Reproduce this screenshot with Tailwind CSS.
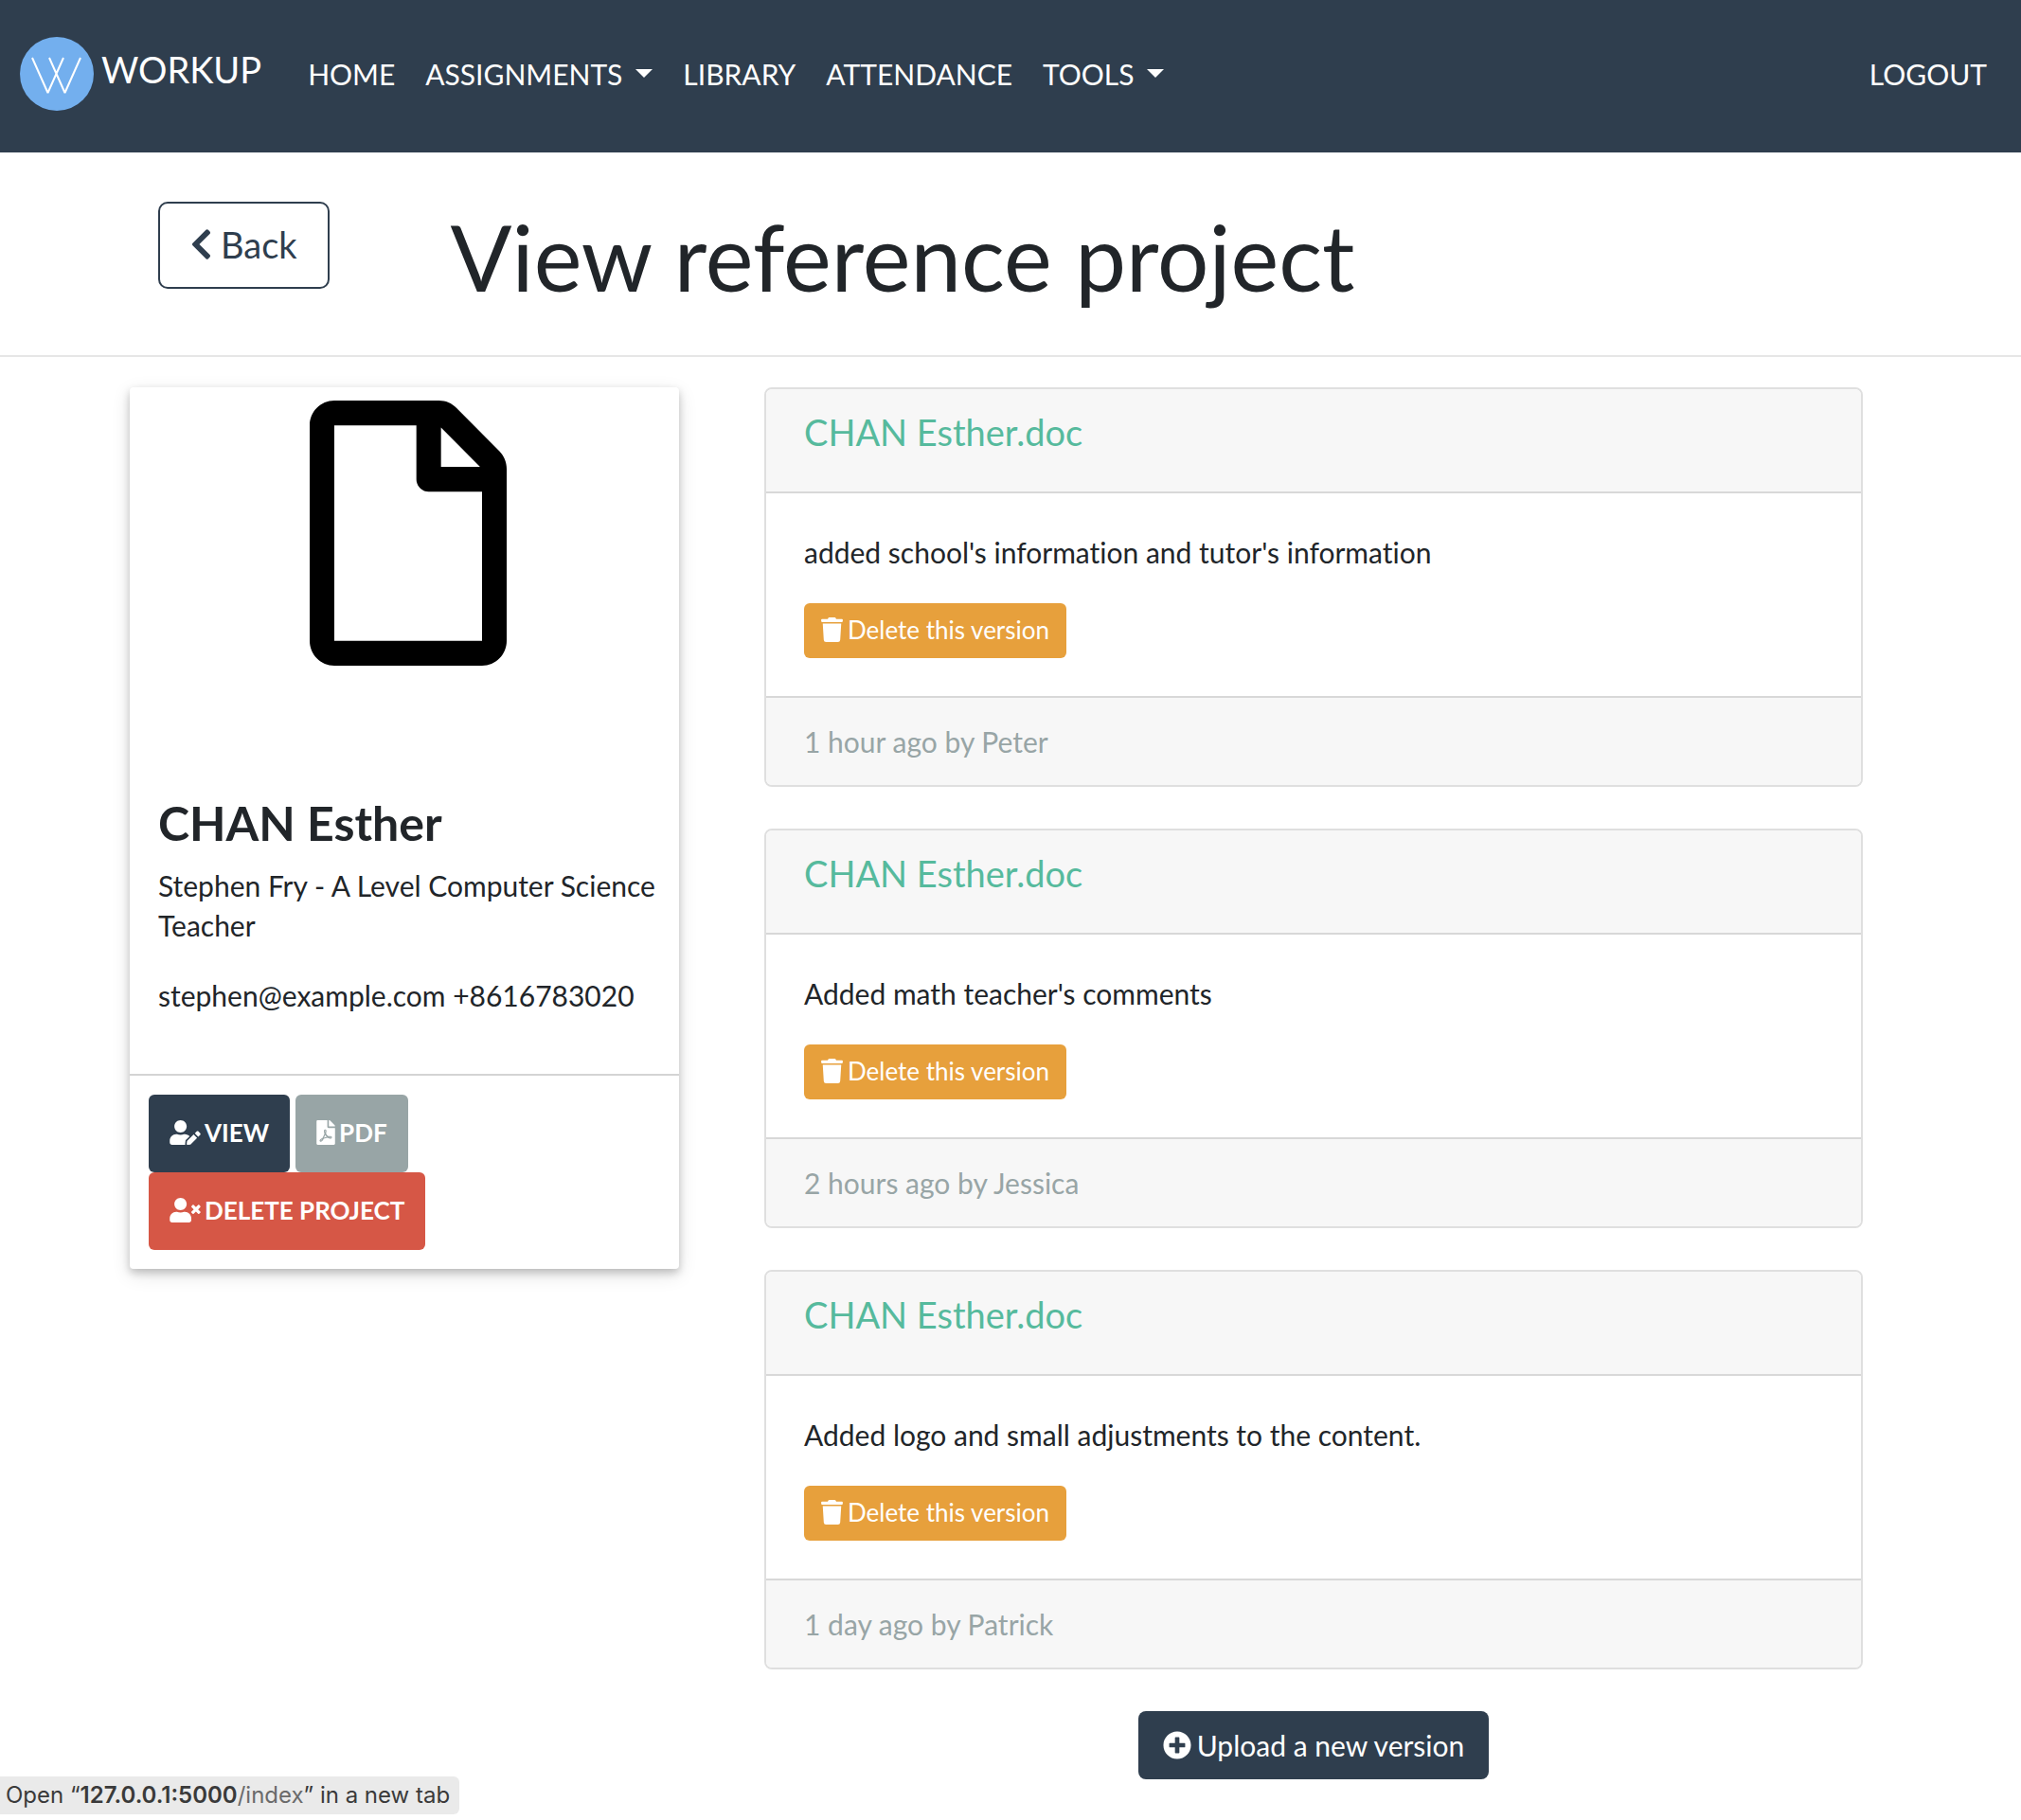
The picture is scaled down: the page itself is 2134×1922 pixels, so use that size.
<!DOCTYPE html>
<html lang="en">
<head>
<meta charset="utf-8">
<meta name="viewport" content="width=device-width, initial-scale=1">
<title>Workup</title>
<script src="https://cdn.jsdelivr.net/npm/@tailwindcss/browser@4"></script>
</head>
<body class="relative min-h-screen bg-white font-['Lato',sans-serif] text-[30px] leading-[42px] text-[#212529] [font-variant-ligatures:no-common-ligatures]">
<svg class="hidden" aria-hidden="true">
  <symbol id="trash" viewBox="0 0 448 512"><path d="M432 32H312l-9.4-18.7A24 24 0 0 0 281.1 0H166.8a23.72 23.72 0 0 0-21.4 13.3L136 32H16A16 16 0 0 0 0 48v32a16 16 0 0 0 16 16h416a16 16 0 0 0 16-16V48a16 16 0 0 0-16-16zM32 128l21.2 339a48 48 0 0 0 47.9 45h245.8a48 48 0 0 0 47.9-45L416 128z"/></symbol>
</svg>

<header class="bg-[#2f3e4e] text-white">
  <nav class="flex h-[161px] items-center pr-[36px] pl-[21px] pb-[6px]">
    <a href="#" class="mr-[49px] flex items-center gap-[8px] text-[38px] leading-[46px]">
      <svg class="size-[78px]" viewBox="0 0 78 78" aria-hidden="true"><circle cx="39" cy="39" r="39" fill="#73afee"/><path d="M13 22L29.500 59L46 22M31 22L47.500 59L64 22" fill="none" stroke="#fff" stroke-width="2" stroke-linejoin="bevel"/></svg>
      <span class="pb-[10px]">WORKUP</span>
    </a>
    <ul class="flex flex-1 items-center gap-[32px]">
      <li><a href="#">HOME</a></li>
      <li><button type="button" class="flex items-center gap-[14px]">ASSIGNMENTS <svg class="h-[9px] w-[18px]" viewBox="0 0 18 9" fill="#fff" aria-hidden="true"><path d="M0 0h18l-9 9z"/></svg></button></li>
      <li><a href="#">LIBRARY</a></li>
      <li><a href="#">ATTENDANCE</a></li>
      <li><button type="button" class="flex items-center gap-[14px]">TOOLS <svg class="h-[9px] w-[18px]" viewBox="0 0 18 9" fill="#fff" aria-hidden="true"><path d="M0 0h18l-9 9z"/></svg></button></li>
      <li class="ml-auto"><a href="#">LOGOUT</a></li>
    </ul>
  </nav>
</header>

<section class="border-b-2 border-[#e6e6e6] pt-[52px] pb-[46px]">
  <div class="mx-auto flex max-w-[1920px] items-start gap-[128px] px-[60px]">
    <button type="button" class="flex h-[92px] items-center gap-[9px] rounded-[10px] border-2 border-[#2f3e4e] px-[32px] pb-[2px] text-[38px] leading-[56px] text-[#2f3e4e]">
      <svg class="h-[38px] w-[23px]" viewBox="0 0 320 512" fill="currentColor" aria-hidden="true"><path d="M34.52 239.03L228.87 44.69c9.37-9.37 24.57-9.37 33.94 0l22.67 22.67c9.36 9.36 9.37 24.52.04 33.9L131.49 256l154.02 154.75c9.34 9.38 9.32 24.54-.04 33.9l-22.67 22.67c-9.37 9.37-24.57 9.37-33.94 0L34.52 272.97c-9.37-9.37-9.37-24.57 0-33.94z"/></svg>
      Back
    </button>
    <h1 class="text-[96px] leading-[116px]">View reference project</h1>
  </div>
</section>

<main class="mx-auto grid max-w-[1920px] grid-cols-3 items-start px-[30px] pt-[32px]">
  <aside class="mr-[40px] rounded-[4px] bg-white shadow-[0_4px_8px_rgba(0,0,0,0.2),0_6px_20px_rgba(0,0,0,0.12)]">
    <div class="flex justify-center pt-[14px] pb-[136px] pl-[8px]">
      <svg class="h-[280px] w-[208px]" viewBox="0 0 384 512" preserveAspectRatio="none" role="img" aria-label="Document"><path d="M369.9 97.9L286 14C277 5 264.8 0 252.1 0H48C21.5 0 0 21.5 0 48v416c0 26.5 21.5 48 48 48h288c26.5 0 48-21.5 48-48V131.9c0-12.7-5.1-25-14.1-34zM332.1 128H256V51.9l76.1 76.1zM48 464V48h160v104c0 13.3 10.7 24 24 24h104v288H48z"/></svg>
    </div>
    <div class="pr-[16px] pb-[62px] pl-[30px]">
      <h2 class="mb-[15px] text-[50px] leading-[60px] font-bold">CHAN Esther</h2>
      <p class="mb-[32px]">Stephen Fry - A Level Computer Science Teacher</p>
      <p>stephen@example.com +8616783020</p>
    </div>
    <div class="flex flex-wrap gap-x-[6px] border-t-2 border-[#d4d4d4] p-[20px] text-[26px] font-bold text-white">
      <button type="button" class="flex h-[82px] items-center gap-[4px] rounded-[6px] bg-[#2f3e4e] px-[22px] pb-[2px]">
        <svg class="h-[26px] w-[33px]" viewBox="0 0 640 512" fill="currentColor" aria-hidden="true"><path d="M224 256c70.7 0 128-57.3 128-128S294.7 0 224 0 96 57.3 96 128s57.3 128 128 128zm89.6 32h-16.7c-22.2 10.2-46.9 16-72.9 16s-50.6-5.8-72.9-16h-16.7C60.2 288 0 348.2 0 422.4V464c0 26.5 21.5 48 48 48h274.9c-2.4-6.8-3.4-14-2.6-21.3l6.8-60.9 1.2-11.1 7.9-7.9 77.3-77.3c-24.5-27.7-60-45.5-99.9-45.5zm45.3 145.3l-6.8 61c-1.1 10.2 7.5 18.8 17.6 17.6l60.9-6.8 137.9-137.9-71.7-71.7-137.9 137.8zM633 268.9L595.1 231c-9.3-9.3-24.5-9.3-33.8 0l-37.8 37.8-4.1 4.1 71.8 71.7 41.8-41.8c9.3-9.4 9.3-24.5 0-33.9z"/></svg>
        VIEW
      </button>
      <button type="button" class="flex h-[82px] items-center gap-[4px] rounded-[6px] bg-[#98a5a6] px-[22px] pb-[2px]">
        <svg class="h-[26px] w-[20px]" viewBox="0 0 384 512" fill="currentColor" aria-hidden="true"><path d="M181.9 256.1c-5-16-4.9-46.9-2-46.9 8.4 0 7.6 36.9 2 46.9zm-1.7 47.2c-7.7 20.2-17.3 43.3-28.4 62.7 18.3-7 39-17.2 62.9-21.9-12.7-9.6-24.9-23.4-34.5-40.8zM86.1 428.1c0 .8 13.2-5.4 34.9-40.2-6.7 6.3-29.1 24.5-34.9 40.2zM248 160h136v328c0 13.3-10.7 24-24 24H24c-13.3 0-24-10.7-24-24V24C0 10.7 10.7 0 24 0h200v136c0 13.2 10.8 24 24 24zm-8 171.8c-20-12.2-33.3-29-42.7-53.8 4.5-18.5 11.6-46.6 6.2-64.2-4.7-29.4-42.4-26.5-47.8-6.8-5 18.3-.4 44.1 8.1 77-11.6 27.6-28.7 64.6-40.8 85.8-.1 0-.1.1-.2.1-27.1 13.9-73.6 44.5-54.5 68 5.6 6.9 16 10 21.5 10 17.9 0 35.7-18 61.1-61.8 25.8-8.5 54.1-19.1 79-23.2 21.7 11.8 47.1 19.5 64 19.5 29.2 0 31.2-32 19.7-43.4-13.9-13.6-54.3-9.7-73.6-7.2zM377 105L279 7c-4.5-4.5-10.6-7-17-7h-6v128h128v-6.1c0-6.3-2.5-12.4-7-16.9zm-74.1 255.3c4.1-2.7-2.5-11.9-42.8-9 37.1 15.8 42.8 9 42.8 9z"/></svg>
        PDF
      </button>
      <button type="button" class="flex h-[82px] items-center gap-[4px] rounded-[6px] bg-[#d65746] px-[22px] pb-[2px]">
        <svg class="h-[26px] w-[33px]" viewBox="0 0 640 512" fill="currentColor" aria-hidden="true"><path d="M589.6 240l45.6-45.6c6.3-6.3 6.3-16.5 0-22.8l-22.8-22.8c-6.3-6.3-16.5-6.3-22.8 0L544 194.4l-45.6-45.6c-6.3-6.3-16.5-6.3-22.8 0l-22.8 22.8c-6.3 6.3-6.3 16.5 0 22.8l45.6 45.6-45.6 45.6c-6.3 6.3-6.3 16.5 0 22.8l22.8 22.8c6.3 6.3 16.5 6.3 22.8 0l45.6-45.6 45.6 45.6c6.3 6.3 16.5 6.3 22.8 0l22.8-22.8c6.3-6.3 6.3-16.5 0-22.8L589.6 240zM224 256c70.7 0 128-57.3 128-128S294.7 0 224 0 96 57.3 96 128s57.3 128 128 128zm89.6 32h-16.7c-22.2 10.2-46.9 16-72.9 16s-50.6-5.8-72.9-16h-16.7C60.2 288 0 348.2 0 422.4V464c0 26.5 21.5 48 48 48h352c26.5 0 48-21.5 48-48v-41.6c0-74.2-60.2-134.4-134.4-134.4z"/></svg>
        DELETE PROJECT
      </button>
    </div>
  </aside>

  <div class="col-span-2 flex flex-col gap-[44px] pr-[30px] pl-[50px]">
    <article class="overflow-hidden rounded-[8px] border-2 border-[#dfdfdf]">
      <h4 class="h-[110px] border-b-2 border-[#d8d8d8] bg-[#f7f7f7] px-[40px] pt-[22px] text-[38px] leading-[46px]"><a href="#" class="text-[#56ba9d]">CHAN Esther.doc</a></h4>
      <div class="px-[40px] pt-[41px] pb-[40px]">
        <p class="mb-[33px]">added school's information and tutor's information</p>
        <button type="button" class="flex h-[58px] items-center gap-[5px] rounded-[6px] bg-[#e7a03c] px-[18px] pb-[2px] text-[26px] leading-[40px] text-white"><svg class="h-[26px] w-[23px]" fill="currentColor" aria-hidden="true"><use href="#trash"/></svg>Delete this version</button>
      </div>
      <footer class="border-t-2 border-[#d8d8d8] bg-[#f7f7f7] px-[40px] py-[25px] text-[#98a5a6]">1 hour ago by Peter</footer>
    </article>
    <article class="overflow-hidden rounded-[8px] border-2 border-[#dfdfdf]">
      <h4 class="h-[110px] border-b-2 border-[#d8d8d8] bg-[#f7f7f7] px-[40px] pt-[22px] text-[38px] leading-[46px]"><a href="#" class="text-[#56ba9d]">CHAN Esther.doc</a></h4>
      <div class="px-[40px] pt-[41px] pb-[40px]">
        <p class="mb-[33px]">Added math teacher's comments</p>
        <button type="button" class="flex h-[58px] items-center gap-[5px] rounded-[6px] bg-[#e7a03c] px-[18px] pb-[2px] text-[26px] leading-[40px] text-white"><svg class="h-[26px] w-[23px]" fill="currentColor" aria-hidden="true"><use href="#trash"/></svg>Delete this version</button>
      </div>
      <footer class="border-t-2 border-[#d8d8d8] bg-[#f7f7f7] px-[40px] py-[25px] text-[#98a5a6]">2 hours ago by Jessica</footer>
    </article>
    <article class="overflow-hidden rounded-[8px] border-2 border-[#dfdfdf]">
      <h4 class="h-[110px] border-b-2 border-[#d8d8d8] bg-[#f7f7f7] px-[40px] pt-[22px] text-[38px] leading-[46px]"><a href="#" class="text-[#56ba9d]">CHAN Esther.doc</a></h4>
      <div class="px-[40px] pt-[41px] pb-[40px]">
        <p class="mb-[33px]">Added logo and small adjustments to the content.</p>
        <button type="button" class="flex h-[58px] items-center gap-[5px] rounded-[6px] bg-[#e7a03c] px-[18px] pb-[2px] text-[26px] leading-[40px] text-white"><svg class="h-[26px] w-[23px]" fill="currentColor" aria-hidden="true"><use href="#trash"/></svg>Delete this version</button>
      </div>
      <footer class="border-t-2 border-[#d8d8d8] bg-[#f7f7f7] px-[40px] py-[25px] text-[#98a5a6]">1 day ago by Patrick</footer>
    </article>
    <button type="button" class="flex h-[72px] items-center gap-[6px] self-center rounded-[8px] bg-[#2f3e4e] px-[26px] text-white">
      <svg class="size-[30px]" viewBox="0 0 512 512" fill="currentColor" aria-hidden="true"><path d="M256 8C119 8 8 119 8 256s111 248 248 248 248-111 248-248S393 8 256 8zm144 276c0 6.6-5.4 12-12 12h-92v92c0 6.6-5.4 12-12 12h-56c-6.6 0-12-5.4-12-12v-92h-92c-6.6 0-12-5.4-12-12v-56c0-6.6 5.4-12 12-12h92v-92c0-6.6 5.4-12 12-12h56c6.6 0 12 5.4 12 12v92h92c6.6 0 12 5.4 12 12v56z"/></svg>
      Upload a new version
    </button>
  </div>
</main>

<div class="fixed bottom-[6px] left-0 h-[40px] rounded-r-[6px] bg-[#eaeaea] pr-[10px] pl-[6px] font-['Inter',sans-serif] text-[24px] leading-[40px] text-[#3a3a3a]">Open “<b class="font-semibold">127.0.0.1:5000</b><span class="text-[#6a6a6a]">/index</span>” in a new tab</div>
</body>
</html>
